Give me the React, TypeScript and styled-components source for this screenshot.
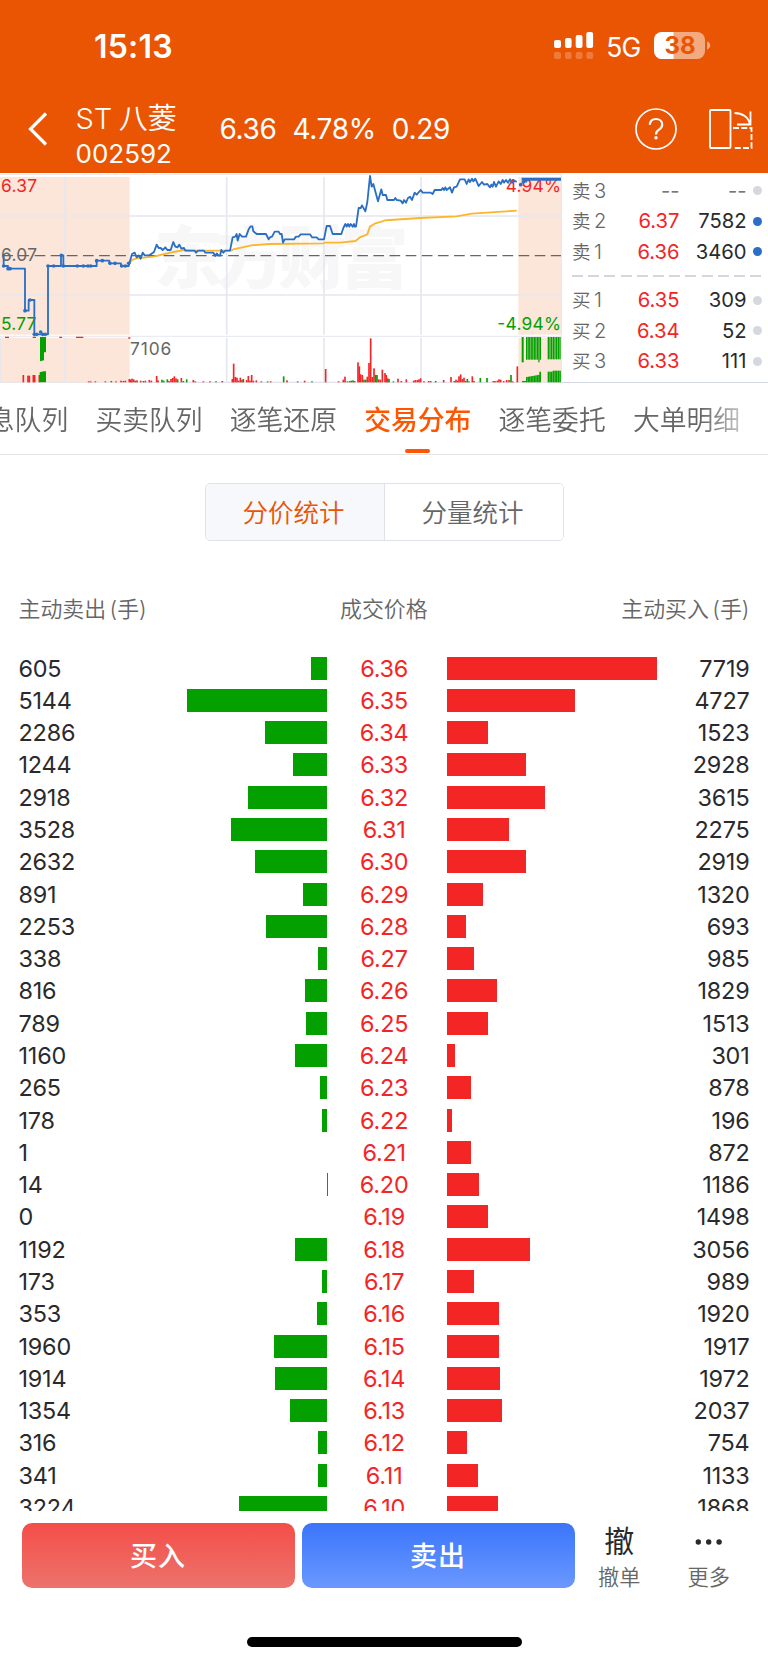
import React from "react";
import styled, { createGlobalStyle } from "styled-components";

const Global = createGlobalStyle`
  * { box-sizing: border-box; }
  body { margin: 0; background: #fff; }
`;

const Page = styled.div`
  width: 768px;
  height: 1662px;
  display: flex;
  flex-direction: column;
  overflow: hidden;
  background: #fff;
  color: #2a2a2c;
  font-family: Inter, "Noto Sans CJK SC", sans-serif;
`;

/* ---------- header ---------- */

const Header = styled.header`
  height: 173px;
  flex: none;
  background: #ea5504;
  color: #fff;
  display: flex;
  flex-direction: column;
`;

const StatusBar = styled.div`
  height: 92px;
  padding: 0 57px 0 94px;
  display: flex;
  align-items: center;
`;

const Clock = styled.div`
  font-size: 32px;
  font-weight: 600;
  letter-spacing: 0.2px;
  margin-right: auto;
`;

const Network = styled.div`
  font-size: 26.5px;
  letter-spacing: -0.8px;
  margin: 1px 13.5px 0 12px;
`;

const TitleBar = styled.div`
  height: 74px;
  display: flex;
  align-items: center;
  padding: 0 15.5px 0 28px;
`;

const Stock = styled.div`
  width: 144px;
  margin-left: 27.5px;
  white-space: nowrap;
`;

const StockName = styled.div`
  font-size: 29px;
  line-height: 36px;
  font-weight: 350;
  display: flex;
  gap: 6.5px;
  margin-top: 14px;
`;

const StockCode = styled.div`
  font-size: 26px;
  line-height: 34px;
  letter-spacing: 0;
  font-weight: 380;
`;

const Quotes = styled.div`
  display: flex;
  gap: 16px;
  font-size: 28px;
  letter-spacing: -0.35px;
  font-weight: 380;
  margin-right: auto;
`;

const Actions = styled.div`
  display: flex;
  align-items: center;
  gap: 32px;
`;

/* ---------- chart and order book ---------- */

const Market = styled.section`
  height: 210px;
  flex: none;
  display: flex;
  border-bottom: 1px solid #d6dae2;
`;

const ChartSvg = styled.svg`
  width: 562px;
  height: 210px;
  flex: none;
  display: block;
`;

const OrderBook = styled.div`
  flex: 1;
  padding: 2.5px 6px 0 10px;
`;

const OrderRow = styled.div`
  height: 30.6px;
  display: grid;
  grid-template-columns: 45px 62.5px 67px 1fr;
  align-items: center;
  font-size: 20.2px;
  line-height: 30px;
`;

const OrderLabel = styled.span`
  color: #666;
  font-weight: 350;
`;

const Level = styled.span`
  margin-left: 3.5px;
`;

const OrderSide = styled.span`
  font-size: 18.5px;
`;

const OrderPrice = styled.span<{ $muted?: boolean }>`
  text-align: right;
  color: ${(p) => (p.$muted ? "#777" : "#f42525")};
`;

const OrderVolume = styled.span<{ $muted?: boolean }>`
  text-align: right;
  color: ${(p) => (p.$muted ? "#777" : "#2a2a2c")};
`;

const Dot = styled.i<{ $active?: boolean }>`
  width: 9px;
  height: 9px;
  border-radius: 50%;
  justify-self: end;
  background: ${(p) => (p.$active ? "#2b6fc4" : "#d5d8df")};
`;

const Divider = styled.div`
  height: 2px;
  margin: 8px 0 7.5px;
  background: repeating-linear-gradient(90deg, #d3d6dd 0 11px, transparent 11px 16.2px);
`;

/* ---------- tabs ---------- */

const Tabs = styled.nav`
  height: 72px;
  flex: none;
  display: flex;
  overflow: hidden;
  border-bottom: 1px solid #e0e2e6;
`;

const TabTrack = styled.div`
  display: flex;
  gap: 27.2px;
  margin-left: -39px;
  -webkit-mask-image: linear-gradient(90deg, #000 0 740px, rgba(0, 0, 0, 0.35) 782px);
  mask-image: linear-gradient(90deg, #000 0 740px, rgba(0, 0, 0, 0.35) 782px);
`;

const Tab = styled.div<{ $active?: boolean }>`
  flex: none;
  height: 71px;
  padding-top: 17px;
  font-size: 26.8px;
  line-height: 40px;
  color: ${(p) => (p.$active ? "#ff5500" : "#666")};
  font-weight: ${(p) => (p.$active ? 500 : 350)};
  display: flex;
  flex-direction: column;
  align-items: center;
  &::after {
    content: "";
    width: 25px;
    height: 4px;
    border-radius: 2px;
    margin-top: 9px;
    background: ${(p) => (p.$active ? "#ff5500" : "transparent")};
  }
`;

/* ---------- distribution ---------- */

const Toggle = styled.div`
  flex: none;
  width: 359px;
  height: 58px;
  margin: 28px 0 0 204.5px;
  display: flex;
  border: 1.5px solid #dfe2e8;
  border-radius: 5px;
  overflow: hidden;
`;

const ToggleItem = styled.div<{ $active?: boolean }>`
  flex: 1;
  display: flex;
  align-items: center;
  justify-content: center;
  padding: 0 2px 3px 0;
  font-size: 25.5px;
  font-weight: 350;
  color: ${(p) => (p.$active ? "#ea5504" : "#666")};
  background: ${(p) => (p.$active ? "#f6f8fb" : "#fff")};
  & + & { border-left: 1px solid #dfe2e8; }
`;

const ColumnHeads = styled.div`
  flex: none;
  height: 34px;
  margin-top: 49px;
  padding: 0 18.5px 0 18.5px;
  display: grid;
  grid-template-columns: 1fr 88px 1fr;
  align-items: center;
  color: #666;
  font-size: 21.9px;
  font-weight: 350;
  & > :last-child { justify-self: end; }
`;

const Head = styled.span`
  display: flex;
  gap: 3.5px;
`;

const List = styled.div`
  flex: none;
  height: 887px;
  padding-top: 28px;
  overflow: hidden;
`;

const Row = styled.div`
  height: 32.29px;
  padding: 0 18.5px 0 18.5px;
  display: grid;
  grid-template-columns: 98.5px 210px 119.8px 211px 1fr;
  align-items: center;
  font-size: 23.4px;
  letter-spacing: -0.2px;
  font-weight: 380;
`;

const Amount = styled.span<{ $right?: boolean }>`
  text-align: ${(p) => (p.$right ? "right" : "left")};
`;

const Price = styled.span`
  color: #f42525;
  text-align: center;
  padding-right: 5.5px;
`;

const Bar = styled.i<{ $side: "sell" | "buy" }>`
  height: 23px;
  background: ${(p) => (p.$side === "sell" ? "#04a000" : "#f42525")};
  justify-self: ${(p) => (p.$side === "sell" ? "end" : "start")};
`;

/* ---------- dock ---------- */

const Dock = styled.footer`
  display: flex;
  padding: 12.3px 0 0 21.5px;
`;

const TradeButton = styled.button<{ $side: "sell" | "buy" }>`
  width: 273px;
  height: 64.5px;
  margin-right: 7px;
  padding: 0 0 2px;
  border: 0;
  border-radius: 10px;
  color: #fff;
  font: 500 27px Inter, "Noto Sans CJK SC", sans-serif;
  letter-spacing: 1px;
  background: ${(p) =>
    p.$side === "buy"
      ? "linear-gradient(#f44e48, #ec736c)"
      : "linear-gradient(#3a75fa, #6b98ff)"};
`;

const DockItem = styled.div`
  width: 89.5px;
  height: 66px;
  margin-left: -7px;
  margin-right: 7px;
  display: flex;
  flex-direction: column;
  align-items: center;
  font-size: 21.2px;
  line-height: 26px;
  font-weight: 350;
  color: #666;
`;

const DockGlyph = styled.div`
  flex: none;
  height: 41px;
  font-size: 30px;
  line-height: 37px;
  font-weight: 400;
  color: #2a2a2c;
`;

const HomeIndicator = styled.div`
  width: 275px;
  height: 9.5px;
  margin: 48px 0 0 247px;
  border-radius: 5px;
  background: #000;
`;

/* ---------- data ---------- */

const rows: [number, string, number][] = [
  [605, "6.36", 7719], [5144, "6.35", 4727], [2286, "6.34", 1523],
  [1244, "6.33", 2928], [2918, "6.32", 3615], [3528, "6.31", 2275],
  [2632, "6.30", 2919], [891, "6.29", 1320], [2253, "6.28", 693],
  [338, "6.27", 985], [816, "6.26", 1829], [789, "6.25", 1513],
  [1160, "6.24", 301], [265, "6.23", 878], [178, "6.22", 196],
  [1, "6.21", 872], [14, "6.20", 1186], [0, "6.19", 1498],
  [1192, "6.18", 3056], [173, "6.17", 989], [353, "6.16", 1920],
  [1960, "6.15", 1917], [1914, "6.14", 1972], [1354, "6.13", 2037],
  [316, "6.12", 754], [341, "6.11", 1133], [3224, "6.10", 1868],
];

const maxVolume = 7719;
const barWidth = (v: number) => `${(v / maxVolume) * 210}px`;

type Order = [string, string, string, string, boolean];
const asks: Order[] = [
  ["卖", "3", "--", "--", false],
  ["卖", "2", "6.37", "7582", true],
  ["卖", "1", "6.36", "3460", true],
];
const bids: Order[] = [
  ["买", "1", "6.35", "309", false],
  ["买", "2", "6.34", "52", false],
  ["买", "3", "6.33", "111", false],
];

const tabs = ["信息队列", "买卖队列", "逐笔还原", "交易分布", "逐笔委托", "大单明细"];

/* Chart units are thirds of a pixel; each session block has its own x origin. */
const toPath = (blocks: [number, number[]][]) =>
  blocks
    .flatMap(([dx, pts]) =>
      pts.reduce<string[]>((out, v, i) => {
        if (i % 2 === 0) out.push(`${v + dx},${pts[i + 1]}`);
        return out;
      }, [])
    )
    .join(" ");

const priceLine = toPath([
  [0, [11,252,11,288,24,288,24,296,75,296,75,422,86,422,86,390,103,390,103,493,144,493,144,288,183,288,183,256,190,256,190,288,290,288,290,272,328,272,328,280,363,280,363,288,386,288,396,252,404,248,410,262,416,256,422,266,428,248,434,256,448,256,462,246,470,224,476,234,482,234,488,240,496,232,502,240,512,240,520,216,526,230,532,232,538,224,544,236,552,234,556,242]],
  [570, [0,242,14,242,18,248,24,242,42,242,46,248,70,248,76,258,80,250,86,257,90,257,94,240,100,248,106,242,120,242,128,202,136,200,140,192,143,212,149,192,156,200,168,200,176,178,182,169,187,169,190,184,200,192,228,192,236,208,240,202,246,200,254,185,266,185,270,192,275,192,279,218,284,208,312,208,318,200,326,200,332,193,360,193,366,202,380,202,386,208,402,208,410,168,420,168,428,192,454,192,460,174,466,162,470,170,474,162,478,170,482,162,488,170,492,162,494,170,498,170,506,114,512,114,516,106,526,124,532,96,540,18,545,50,550,42,564,94,574,58,578,75]],
  [1140, [18,75,22,90,42,90,46,84,50,90,62,92,68,100,72,90,78,98,84,84,90,80,96,90,104,68,110,74,122,60,128,68,152,68,158,72,164,60,184,60,188,54,192,60,196,52,200,60,210,52,216,68,222,52,230,50,240,28,254,28,260,42,266,28,270,36,276,26,280,34,286,26,296,48,306,36,312,44,322,42,330,52,334,44,338,50,342,36,348,50,356,34,362,42,368,30,372,38,378,30,384,38,390,28,396,38,404,32,410,36]],
]);

const averageLine = toPath([
  [0, [386,284,396,270,410,265,460,260,520,246,552,240]],
  [570, [0,242,124,242,130,238,184,226,240,222,400,220,404,218,450,218,496,213,510,202,532,193,540,170,556,160,572,156]],
  [1140, [14,151,30,150,120,144,230,139,275,131,410,122]],
]);

const openDots: [number, number][] = [
  [11,288],[24,296],[30,296],[75,422],[90,390],[103,493],[110,493],[122,486],[128,493],[136,493],[144,288],[161,288],[184,256],[190,288],[232,288],[250,288],[264,288],[272,288],[290,272],[307,272],[330,280],[345,280],[365,288],[376,288],[386,280],
];

/* x, bar height, 1 = up (red) / 0 = down (green) */
const volumes: [number, number, number][] = [
  [70,22,1],[84,20,1],[88,20,1],[100,22,1],[104,22,1],[118,22,1],
  [266,3,1],[272,3,1],[286,3,1],[316,3,1],[334,4,0],[348,3,1],[363,5,1],[370,4,1],[376,5,1],[388,10,1],[392,8,1],[396,11,1],[401,9,1],[406,5,0],[411,6,1],[422,5,1],[430,4,0],[436,5,1],[448,7,1],[454,5,1],[470,19,1],[474,6,1],[486,8,0],[491,5,0],[502,9,0],[507,4,1],[513,10,1],[518,13,1],[523,18,1],[528,12,1],[533,9,0],[544,13,1],[550,4,0],[560,9,0],[580,7,1],[586,3,1],
  [610,3,1],[630,3,1],[648,3,0],[667,4,1],[697,10,1],[701,56,1],[706,16,1],[711,14,1],[716,5,1],[721,14,1],[726,7,1],[730,10,0],[740,7,1],[745,19,1],[750,5,1],[755,22,1],[760,5,1],[769,6,1],[784,3,1],[803,3,0],[812,3,1],[851,18,0],[861,6,1],[893,3,1],[914,5,1],[936,3,0],
  [977,40,1],[1016,3,1],[1030,8,1],[1035,17,1],[1042,3,0],[1049,4,1],[1054,5,0],[1059,6,0],[1064,4,1],
  [1074,60,1],[1078,48,1],[1082,24,1],[1087,22,1],[1092,8,0],[1097,8,0],[1102,17,1],[1107,58,1],[1112,132,1],[1117,16,1],[1122,42,1],[1127,22,0],[1131,22,0],[1136,9,1],[1141,8,1],[1147,38,1],[1155,28,1],[1159,22,1],[1163,12,1],[1167,10,0],[1180,3,0],[1194,11,1],[1204,4,1],[1219,9,1],[1241,5,1],[1246,7,1],[1252,7,1],[1257,9,1],[1262,12,1],[1272,3,1],[1286,4,1],[1292,4,1],[1307,4,0],[1331,7,1],[1353,16,1],[1363,4,0],[1368,8,1],[1373,5,1],[1377,18,1],[1382,24,1],[1387,10,1],[1392,14,1],[1397,4,1],[1402,10,0],[1407,3,0],[1417,18,1],[1422,4,1],[1441,13,0],[1461,13,0],[1480,4,1],[1485,4,1],[1492,5,1],[1497,9,1],[1502,8,1],[1511,4,1],[1520,7,1],[1527,7,1],[1533,22,0],[1538,3,1],[1552,48,1],
];

const closeBars = Array.from({ length: 9 }, (_, i) => 1578 + i * 4.6);
const closeBarsLate = Array.from({ length: 8 }, (_, i) => 1643 + i * 5);

const Chart = () => (
  <ChartSvg viewBox="0 9 1686 630">
    <g fill="#fce6da">
      <rect x="0" y="21" width="389" height="473" />
      <rect x="0" y="503" width="389" height="135" />
      <rect x="1555" y="21" width="130" height="473" />
      <rect x="1555" y="503" width="130" height="135" />
    </g>
    <text x="462" y="340" fontSize="206" fontWeight="900" fill="#f7f7f8" fontFamily='"Noto Sans CJK SC", sans-serif' textLength="764">
      东方财富
    </text>
    <g stroke="#e5e8ef" strokeWidth="5">
      <path d="M195 21V494M195 503V638M680 21V494M680 503V638M972 21V494M972 503V638M1263 21V494M1263 503V638" />
      <path d="M0 138H1686M0 375H1686" />
      <path d="M0 499H1686M0 636.5H1686M1684 12V638M2 503V638M0 13H1686" strokeWidth="3" />
    </g>
    <path d="M7 257H1683" stroke="#666" strokeWidth="3.5" strokeDasharray="32 16.4" />
    <g fontFamily="Inter, sans-serif" fontSize="52">
      <text x="3" y="66" fill="#f42525" textLength="108">6.37</text>
      <text x="3" y="273" fill="#666" textLength="108">6.07</text>
      <text x="3" y="479" fill="#04a000" textLength="106">5.77</text>
      <text x="1517" y="66" fill="#f42525" textLength="166">4.94%</text>
      <text x="1492" y="479" fill="#04a000" textLength="191">-4.94%</text>
      <text x="390" y="556" fill="#666" textLength="124">7106</text>
    </g>
    {volumes.map(([x, h, up], i) => (
      <rect key={i} x={x - 2.5} y={637 - h} width="5" height={h} fill={up ? "#f42525" : "#04a000"} />
    ))}
    <path d="M120 501h18v46h-6v24l-12 3z M119 637v-30l12-3h7v33z" fill="#04a000" />
    <path d="M15 502h12M98 502h10M178 502h8M228 502h22M385 504h6" stroke="#f42525" strokeWidth="4" />
    <g fill="#04a000">
      <rect x="1565" y="501" width="6" height="76" />
      {closeBars.map((x, i) => (
        <React.Fragment key={x}>
          <rect x={x} y="501" width="3.9" height={i === 8 ? 76 : 68} />
          <rect x={x} y={621 - i * 0.8} width="4.6" height={16 + i * 0.8} />
        </React.Fragment>
      ))}
      <path d="M1566 633h12v4h-12zM1618 605h5v32h-5zM1619 501h4v68h-4z" />
      {closeBarsLate.map((x) => (
        <React.Fragment key={x}>
          <rect x={x} y="501" width="4" height="67" />
          <rect x={x} y={x < 1655 ? 605 : 602} width="4.6" height={x < 1655 ? 32 : 35} />
        </React.Fragment>
      ))}
    </g>
    <polyline points={averageLine} fill="none" stroke="#fdb52b" strokeWidth="5.5" />
    <polyline points={priceLine} fill="none" stroke="#2b6fc4" strokeWidth="5.5" strokeLinejoin="round" />
    <g fill="#2b6fc4">
      {openDots.map(([x, y], i) => (
        <circle key={i} cx={x} cy={y} r="5.5" />
      ))}
      <path d="M1565 23h118v9h-118z" />
      <circle cx="1562" cy="44" r="5.5" />
      <circle cx="1570" cy="36" r="5.5" />
      <circle cx="1578" cy="34" r="4" />
    </g>
  </ChartSvg>
);

const Signal = () => (
  <svg width="40" height="28" viewBox="0 0 40 28" fill="#fff">
    <rect x="0" y="8" width="7" height="8" rx="2" />
    <rect x="11" y="6" width="6.6" height="10" rx="2" />
    <rect x="21.7" y="3" width="6.8" height="13" rx="2" />
    <rect x="32.3" y="0" width="6.8" height="16" rx="2" />
    <g opacity="0.22">
      <rect x="0" y="20" width="7" height="7" rx="2" />
      <rect x="11" y="20" width="6.6" height="7" rx="2" />
      <rect x="21.7" y="20" width="6.8" height="7" rx="2" />
      <rect x="32.3" y="20" width="6.8" height="7" rx="2" />
    </g>
  </svg>
);

const Battery = () => (
  <svg width="57" height="28" viewBox="0 0 57 28">
    <defs>
      <clipPath id="cell"><rect width="51" height="27" rx="8" /></clipPath>
    </defs>
    <g clipPath="url(#cell)">
      <rect width="51" height="27" fill="#f4aa81" />
      <rect width="19.5" height="27" fill="#fff" />
    </g>
    <path d="M53 9.5c2.3 .8 3.2 2.2 3.2 4s-.9 3.2-3.2 4z" fill="#f4aa81" />
    <text x="26" y="22.2" textAnchor="middle" fontFamily="Inter, sans-serif" fontWeight="700" fontSize="24" fill="#ea5504">38</text>
  </svg>
);

const BackIcon = () => (
  <svg width="20" height="34" viewBox="0 0 20 34" fill="none" stroke="#fff" strokeWidth="3.2">
    <path d="M18 1.5 2.5 17 18 32.5" />
  </svg>
);

const HelpIcon = () => (
  <svg width="42" height="42" viewBox="0 0 42 42" fill="none" stroke="#fff" strokeWidth="1.7">
    <circle cx="21" cy="21" r="20" />
    <path d="M14.8 16.8C15 13.2 17.4 11 21 11s6.2 2.3 6.2 5.5c0 2.5-1.3 3.9-3.2 5.1-2.2 1.4-3 2.5-3 4.9" strokeWidth="2.2" />
    <circle cx="21" cy="29.8" r="1.7" fill="#fff" stroke="none" />
  </svg>
);

const RotateIcon = () => (
  <svg width="44" height="42" viewBox="0 0 44 42" fill="none" stroke="#fff" strokeWidth="1.8">
    <rect x="1" y="2" width="20.5" height="38" rx="1" />
    <path d="M24 20H42.5V40H24" strokeDasharray="6 2.2" />
    <path d="M25.5 5C33 5 40 9 40.8 16.5M41.5 3.5V16.5H28" />
  </svg>
);

const MoreSvg = styled.svg`
  flex: none;
  width: 28px;
  height: 41px;
`;

const MoreIcon = () => (
  <MoreSvg viewBox="0 0 28 41" fill="#2a2a2c">
    <circle cx="3.3" cy="19" r="2.7" />
    <circle cx="13.7" cy="19" r="2.7" />
    <circle cx="24.1" cy="19" r="2.7" />
  </MoreSvg>
);

const OrderLine = ({ order: [side, level, price, volume, active] }: { order: Order }) => (
  <OrderRow>
    <OrderLabel><OrderSide>{side}</OrderSide><Level>{level}</Level></OrderLabel>
    <OrderPrice $muted={price === "--"}>{price}</OrderPrice>
    <OrderVolume $muted={volume === "--"}>{volume}</OrderVolume>
    <Dot $active={active} />
  </OrderRow>
);

export default function App() {
  return (
    <Page>
      <Global />
      <Header>
        <StatusBar>
          <Clock>15:13</Clock>
          <Signal />
          <Network>5G</Network>
          <Battery />
        </StatusBar>
        <TitleBar>
          <BackIcon />
          <Stock>
            <StockName><span>ST</span><span>八菱</span></StockName>
            <StockCode>002592</StockCode>
          </Stock>
          <Quotes><span>6.36</span><span>4.78%</span><span>0.29</span></Quotes>
          <Actions>
            <HelpIcon />
            <RotateIcon />
          </Actions>
        </TitleBar>
      </Header>
      <Market>
        <Chart />
        <OrderBook>
          {asks.map((o) => <OrderLine key={o[1]} order={o} />)}
          <Divider />
          {bids.map((o) => <OrderLine key={o[1]} order={o} />)}
        </OrderBook>
      </Market>
      <Tabs>
        <TabTrack>
          {tabs.map((t) => <Tab key={t} $active={t === "交易分布"}>{t}</Tab>)}
        </TabTrack>
      </Tabs>
      <Toggle>
        <ToggleItem $active>分价统计</ToggleItem>
        <ToggleItem>分量统计</ToggleItem>
      </Toggle>
      <ColumnHeads>
        <Head><span>主动卖出</span><span>(手)</span></Head>
        <Head>成交价格</Head>
        <Head><span>主动买入</span><span>(手)</span></Head>
      </ColumnHeads>
      <List>
        {rows.map(([sell, price, buy]) => (
          <Row key={price}>
            <Amount>{sell}</Amount>
            <Bar $side="sell" style={{ width: barWidth(sell) }} />
            <Price>{price}</Price>
            <Bar $side="buy" style={{ width: barWidth(buy) }} />
            <Amount $right>{buy}</Amount>
          </Row>
        ))}
      </List>
      <Dock>
        <TradeButton $side="buy">买入</TradeButton>
        <TradeButton $side="sell">卖出</TradeButton>
        <DockItem><DockGlyph>撤</DockGlyph>撤单</DockItem>
        <DockItem><MoreIcon />更多</DockItem>
      </Dock>
      <HomeIndicator />
    </Page>
  );
}
